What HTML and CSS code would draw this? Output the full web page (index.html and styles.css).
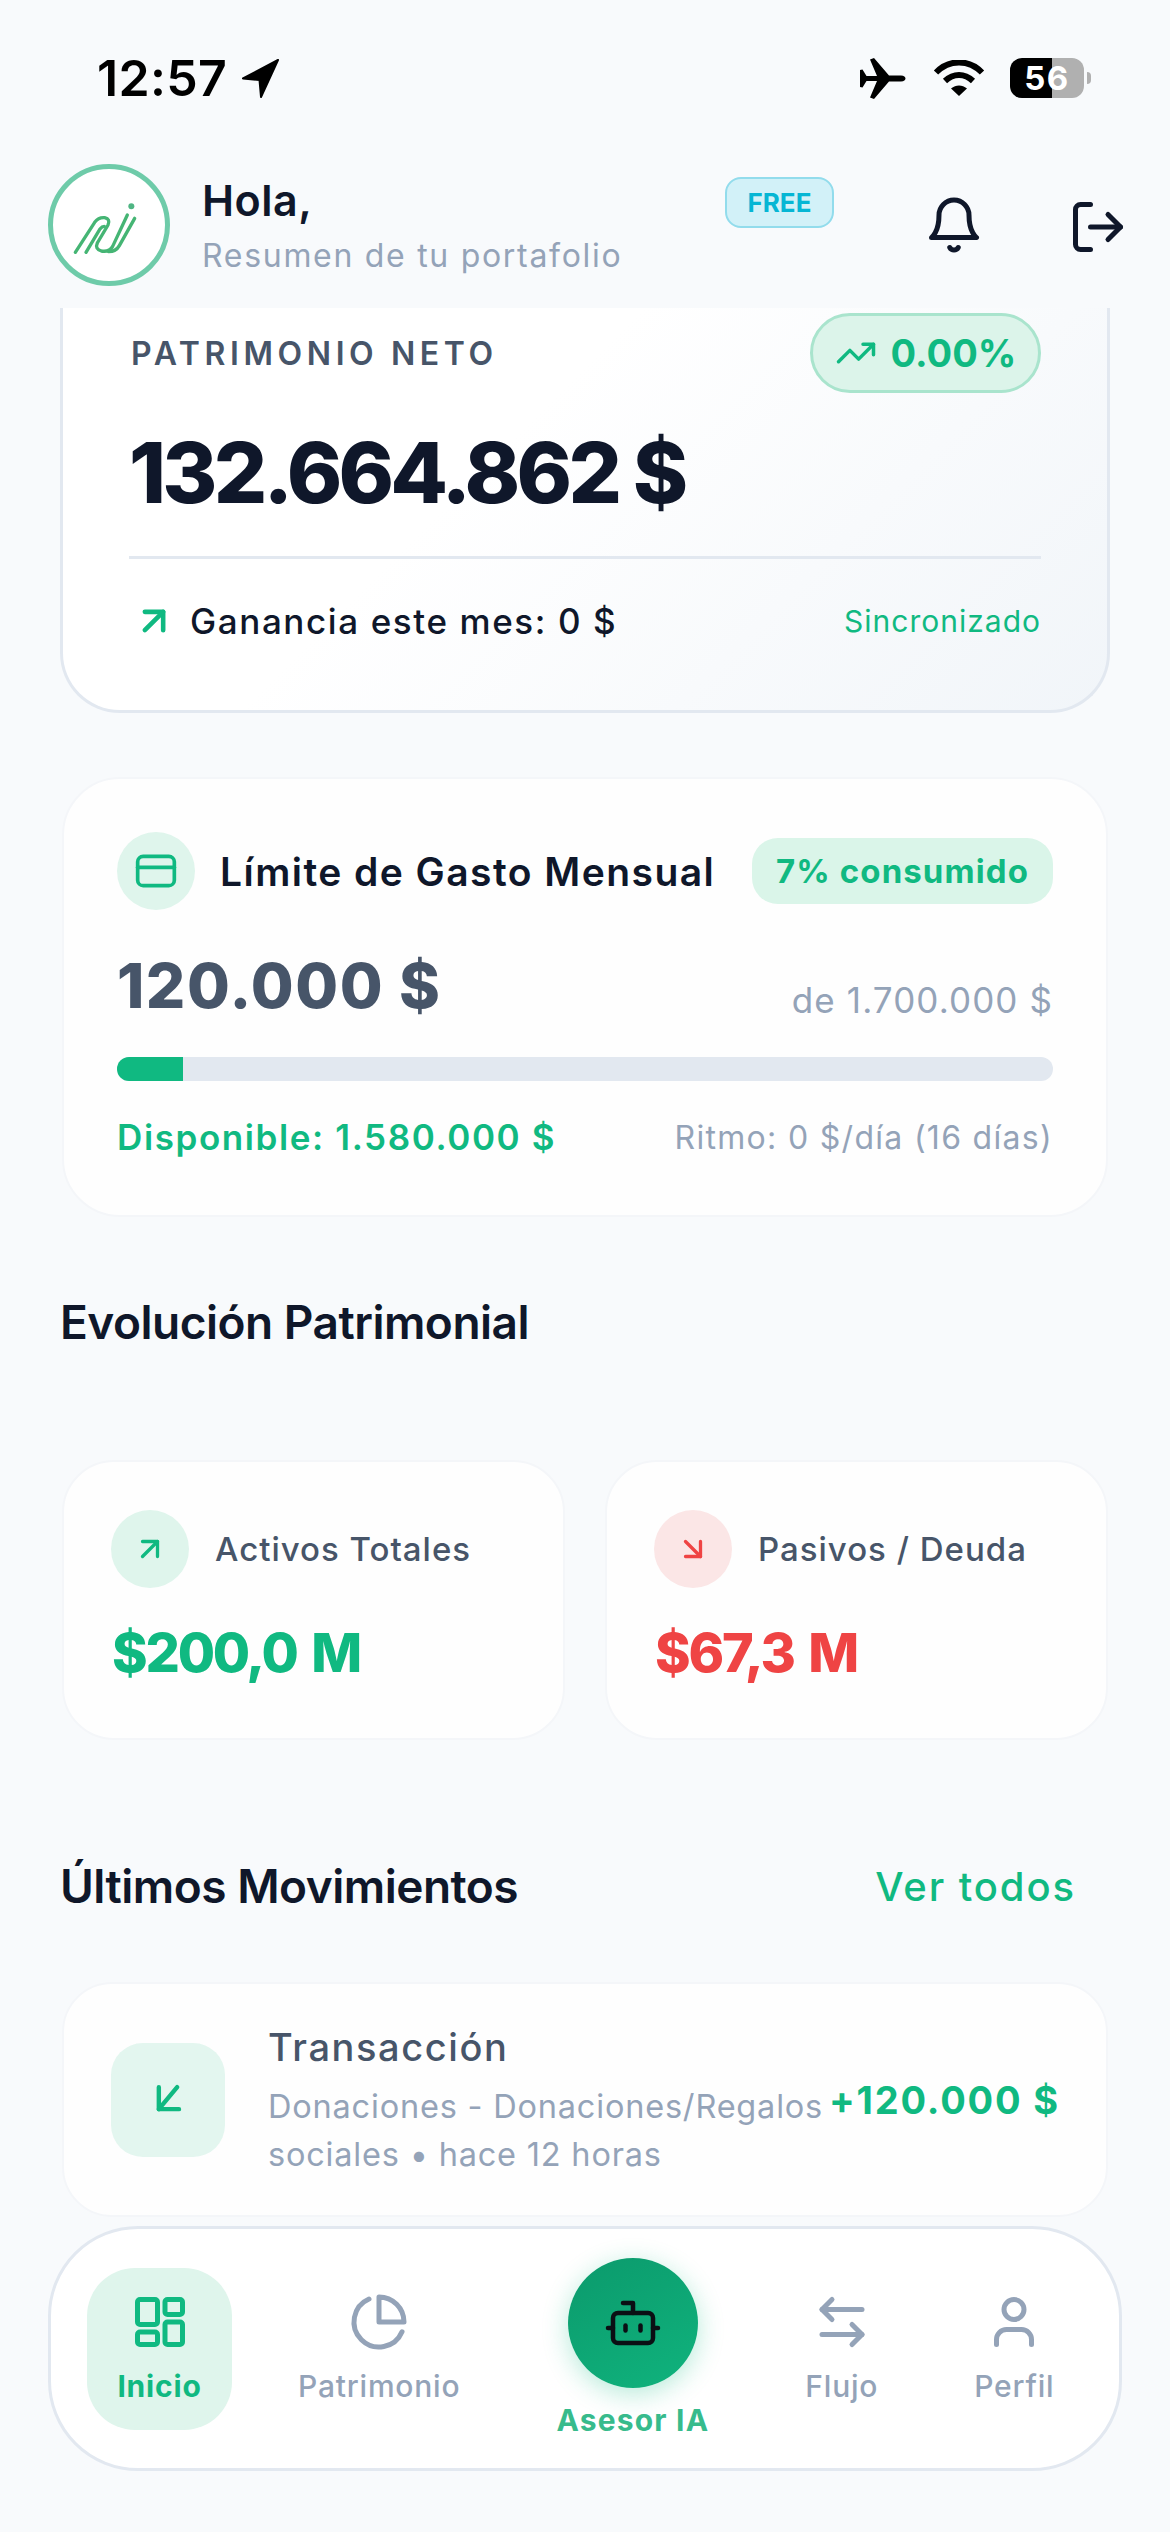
FILE: index.html
```html
<!DOCTYPE html>
<html lang="es">
<head>
    <meta charset="UTF-8">
    <meta name="viewport" content="width=device-width, initial-scale=1.0">
    <link rel="stylesheet" href="styles.css">
</head>
<body>
    <div class="status-bar">
        <div class="status-left">
            <span class="clock">12:57</span>
            <svg class="loc-icon" viewBox="0 0 40 40"><path d="M37 2 2 20.500l16.500 1.500L20 39z" fill="#000" stroke="#000" stroke-width="2" stroke-linejoin="round"/></svg>
        </div>
        <div class="status-right">
            <svg class="plane-icon" viewBox="0 0 47 41"><path d="M0 12l2.500-.5 4 6.500H17L10 1.500 14 0l15 17.500h12c6 0 6 6 0 6H29L14 41l-4-1.500L17 23H6.500l-4 6.500L0 29z" fill="#000"/></svg>
            <svg class="wifi-icon" viewBox="0 0 52 36"><path d="M3 12.500C16-1 36-1 49 12.500" fill="none" stroke="#000" stroke-width="6"/><path d="M12 21c8.500-8 19.500-8 28 0" fill="none" stroke="#000" stroke-width="6"/><path d="M18 28.500c5-4 11-4 16 0L26 36z" fill="#000"/></svg>
            <span class="battery">56</span>
            <span class="battery-nub"></span>
        </div>
    </div>

    <header class="top-header">
        <div class="avatar">
            <svg viewBox="0 0 225 195" class="logo" fill="none" stroke="#45b574" stroke-width="10" stroke-linecap="round">
                <path d="M10 178 68 88Q80 72 98 74Q116 78 108 96L76 150Q68 168 88 174Q112 178 122 160L166 66"/>
                <path d="M42 178 84 108Q90 100 97 100"/>
                <path d="M110 176Q132 176 142 158L188 76"/>
                <circle cx="178" cy="40" r="9" fill="#4fb583" stroke="none"/>
            </svg>
        </div>
        <div class="greeting">
            <div class="hello">Hola,</div>
            <div class="subtitle">Resumen de tu portafolio</div>
        </div>
        <span class="free-badge">FREE</span>
        <svg class="bell-icon" viewBox="0 0 24 24" fill="none" stroke="#0f172a" stroke-width="2" stroke-linecap="round" stroke-linejoin="round"><path d="M6 8a6 6 0 0 1 12 0c0 7 3 9 3 9H3s3-2 3-9"/><path d="M10.300 21a1.940 1.940 0 0 0 3.400 0"/></svg>
        <svg class="logout-icon" viewBox="0 0 24 24" fill="none" stroke="#0f172a" stroke-width="2" stroke-linecap="round" stroke-linejoin="round"><path d="M9 21H5a2 2 0 0 1-2-2V5a2 2 0 0 1 2-2h4"/><path d="m16 17 5-5-5-5"/><path d="M21 12H9"/></svg>
    </header>

    <section class="net-card">
        <div class="net-top">
            <span class="net-label">PATRIMONIO NETO</span>
            <span class="net-pill">
                <svg class="trend-icon" viewBox="0 0 24 24" fill="none" stroke="#10b981" stroke-width="2" stroke-linecap="round" stroke-linejoin="round"><path d="M22 7l-8.500 8.500-5-5L2 17"/><path d="M16 7h6v6"/></svg>
                0.00%
            </span>
        </div>
        <div class="net-value">132.664.862 $</div>
        <div class="net-bottom">
            <svg class="gain-icon" viewBox="0 0 24 24" fill="none" stroke="#10b981" stroke-width="2.500" stroke-linecap="round" stroke-linejoin="round"><path d="M7 7h10v10"/><path d="M7 17 17 7"/></svg>
            <span class="gain-text">Ganancia este mes: 0 $</span>
            <span class="sync-text">Sincronizado</span>
        </div>
    </section>

    <section class="card limit-card">
        <div class="limit-head">
            <span class="round-icon green-soft">
                <svg class="card-icon" viewBox="0 0 24 24" fill="none" stroke="#10b981" stroke-width="2" stroke-linecap="round" stroke-linejoin="round"><rect x="2" y="4" width="20" height="16" rx="3"/><path d="M2 10h20"/></svg>
            </span>
            <span class="limit-title">Límite de Gasto Mensual</span>
            <span class="limit-pill">7% consumido</span>
        </div>
        <div class="limit-amounts">
            <span class="limit-spent">120.000 $</span>
            <span class="limit-total">de 1.700.000 $</span>
        </div>
        <div class="bar"><div class="bar-fill" style="width: 7%"></div></div>
        <div class="limit-foot">
            <span class="limit-free">Disponible: 1.580.000 $</span>
            <span class="limit-pace">Ritmo: 0 $/día (16 días)</span>
        </div>
    </section>

    <h2 class="section-title evo-title">Evolución Patrimonial</h2>

    <div class="stat-row">
        <div class="card stat-card">
            <div class="stat-head">
                <span class="round-icon green-soft">
                    <svg class="stat-icon" viewBox="0 0 24 24" fill="none" stroke="#10b981" stroke-width="2.200" stroke-linecap="round" stroke-linejoin="round"><path d="M7 7h10v10"/><path d="M7 17 17 7"/></svg>
                </span>
                <span class="stat-label">Activos Totales</span>
            </div>
            <div class="stat-value green">$200,0 M</div>
        </div>
        <div class="card stat-card">
            <div class="stat-head">
                <span class="round-icon red-soft">
                    <svg class="stat-icon" viewBox="0 0 24 24" fill="none" stroke="#ef4444" stroke-width="2.200" stroke-linecap="round" stroke-linejoin="round"><path d="m7 7 10 10"/><path d="M17 7v10H7"/></svg>
                </span>
                <span class="stat-label">Pasivos / Deuda</span>
            </div>
            <div class="stat-value red">$67,3 M</div>
        </div>
    </div>

    <div class="moves-head">
        <h2 class="section-title">Últimos Movimientos</h2>
        <span class="see-all">Ver todos</span>
    </div>

    <div class="card move-card">
        <span class="move-icon">
            <svg class="move-arrow" viewBox="0 0 24 24" fill="none" stroke="#10b981" stroke-width="2.400" stroke-linecap="round" stroke-linejoin="round"><path d="M17 5 7 17"/><path d="M18 17H7V5"/></svg>
        </span>
        <div class="move-info">
            <div class="move-title">Transacción</div>
            <div class="move-sub">Donaciones - Donaciones/Regalos sociales • hace 12 horas</div>
        </div>
        <span class="move-amount">+120.000 $</span>
    </div>

    <nav class="bottom-nav">
        <div class="nav-item active">
            <svg class="nav-icon" viewBox="0 0 24 24" fill="none" stroke="#10b981" stroke-width="2" stroke-linecap="round" stroke-linejoin="round"><rect x="3" y="3" width="8" height="10" rx="1"/><rect x="14" y="3" width="7" height="6" rx="1"/><rect x="14" y="12" width="7" height="9" rx="1"/><rect x="3" y="16" width="8" height="5" rx="1"/></svg>
            <span>Inicio</span>
        </div>
        <div class="nav-item second">
            <svg class="nav-icon" viewBox="0 0 24 24" fill="none" stroke="#94a3b8" stroke-width="2" stroke-linecap="round" stroke-linejoin="round"><path d="M21.210 15.890A10 10 0 1 1 8 2.830"/><path d="M22 12A10 10 0 0 0 12 2v10z"/></svg>
            <span>Patrimonio</span>
        </div>
        <div class="nav-item advisor">
            <span class="advisor-btn">
                <svg class="bot-icon" viewBox="0 0 24 24" fill="none" stroke="#0b0f14" stroke-width="1.800" stroke-linecap="round" stroke-linejoin="round"><path d="M12 8V4H8"/><rect x="4" y="8" width="16" height="12" rx="2"/><path d="M2 14h2"/><path d="M20 14h2"/><path d="M15 13v2"/><path d="M9 13v2"/></svg>
            </span>
            <span>Asesor IA</span>
        </div>
        <div class="nav-item">
            <svg class="nav-icon" viewBox="0 0 24 24" fill="none" stroke="#94a3b8" stroke-width="2" stroke-linecap="round" stroke-linejoin="round"><path d="M8 3 4 7l4 4"/><path d="M4 7h16"/><path d="m16 21 4-4-4-4"/><path d="M20 17H4"/></svg>
            <span>Flujo</span>
        </div>
        <div class="nav-item">
            <svg class="nav-icon" viewBox="0 0 24 24" fill="none" stroke="#94a3b8" stroke-width="2" stroke-linecap="round" stroke-linejoin="round"><path d="M19 21v-2a4 4 0 0 0-4-4H9a4 4 0 0 0-4 4v2"/><circle cx="12" cy="7" r="4"/></svg>
            <span>Perfil</span>
        </div>
    </nav>
</body>
</html>
```

FILE: styles.css
```css
* {
    box-sizing: border-box;
}

body {
    margin: 0;
    height: 2532px;
    overflow: hidden;
    background-color: #f8fafc;
    color: #0f172a;
    font-family: Inter, "Noto Sans", sans-serif;
}

/* status bar */
.status-bar {
    height: 164px;
    padding: 56px 79px 0 97px;
    display: flex;
    justify-content: space-between;
    align-items: flex-start;
}

.status-left {
    display: flex;
    align-items: center;
    gap: 14px;
}

.clock {
    font-size: 50px;
    line-height: 44px;
    font-weight: 600;
    color: #000;
    letter-spacing: 0.3px;
}

.loc-icon {
    width: 40px;
    height: 40px;
}

.status-right {
    display: flex;
    align-items: center;
    height: 44px;
}

.plane-icon {
    width: 47px;
    height: 41px;
}

.wifi-icon {
    width: 52px;
    height: 36px;
    margin-left: 26px;
}

.battery {
    width: 74px;
    height: 40px;
    margin-left: 25px;
    border-radius: 12px;
    background: linear-gradient(90deg, #000 57%, #b0b0b0 57%);
    color: #fff;
    font-size: 33px;
    line-height: 40px;
    font-weight: 700;
    text-align: center;
    letter-spacing: 1.500px;
}

.battery-nub {
    width: 4px;
    height: 12px;
    margin-left: 3px;
    border-radius: 0 4px 4px 0;
    background-color: #b0b0b0;
}

/* header */
.top-header {
    height: 144px;
    padding-left: 48px;
    display: flex;
    align-items: flex-start;
}

.avatar {
    width: 122px;
    height: 122px;
    flex: none;
    border: 5px solid #6ecba9;
    border-radius: 50%;
    background-color: #fff;
    display: flex;
    align-items: center;
    justify-content: center;
}

.logo {
    width: 75px;
    height: 65px;
}

.greeting {
    width: 523px;
    flex: none;
    margin-left: 32px;
}

.hello {
    font-size: 43px;
    line-height: 50px;
    font-weight: 600;
    margin-top: 11px;
    letter-spacing: 0.5px;
}

.subtitle {
    font-size: 32px;
    line-height: 40px;
    margin-top: 11px;
    color: #94a3b8;
    letter-spacing: 1.7px;
}

.free-badge {
    width: 109px;
    height: 51px;
    flex: none;
    margin-top: 13px;
    border: 2px solid #92dcec;
    border-radius: 16px;
    background-color: #d2f1f8;
    color: #06b6d4;
    font-size: 26px;
    line-height: 47px;
    font-weight: 700;
    text-align: center;
}

.bell-icon {
    width: 60px;
    height: 60px;
    flex: none;
    margin: 31px 0 0 90px;
}

.logout-icon {
    width: 60px;
    height: 60px;
    flex: none;
    margin: 33px 0 0 84px;
}

/* net worth card */
.net-card {
    height: 405px;
    margin: 0 60px;
    padding: 5px 66px 0;
    border: 3px solid #e2e8f0;
    border-top: 0;
    border-radius: 0 0 60px 60px;
    background: linear-gradient(135deg, #ffffff 40%, #f1f5f9 100%);
}

.net-top {
    display: flex;
    justify-content: space-between;
    align-items: center;
}

.net-label {
    font-size: 32px;
    font-weight: 600;
    color: #475569;
    letter-spacing: 4.600px;
    margin-left: 2px;
}

.net-pill {
    width: 231px;
    height: 80px;
    border: 3px solid #a9e4cd;
    border-radius: 40px;
    background-color: #dcf4ea;
    color: #10b981;
    font-size: 38px;
    font-weight: 700;
    display: flex;
    align-items: center;
    justify-content: center;
    gap: 14px;
}

.trend-icon {
    width: 42px;
    height: 42px;
}

.net-value {
    font-size: 84px;
    line-height: 100px;
    font-weight: 800;
    letter-spacing: -3.800px;
    margin-top: 30px;
}

.net-bottom {
    margin-top: 33px;
    padding: 40px 0 0 3px;
    border-top: 3px solid #e2e8f0;
    display: flex;
    align-items: center;
}

.gain-icon {
    width: 44px;
    height: 44px;
}

.gain-text {
    flex: 1;
    margin-left: 14px;
    font-size: 35px;
    font-weight: 500;
    letter-spacing: 1.600px;
}

.sync-text {
    font-size: 30px;
    color: #10b981;
    letter-spacing: 1px;
}

/* plain cards */
.card {
    border: 2px solid #f4f6f9;
    background-color: #fefefe;
}

.limit-card {
    height: 440px;
    margin: 64px 62px 0;
    padding: 53px 53px 0;
    border-radius: 58px;
}

.limit-head {
    display: flex;
    align-items: center;
}

.round-icon {
    width: 78px;
    height: 78px;
    flex: none;
    border-radius: 50%;
    display: flex;
    align-items: center;
    justify-content: center;
}

.green-soft {
    background-color: #dff5ec;
}

.red-soft {
    background-color: #fbe6e6;
}

.card-icon {
    width: 44px;
    height: 44px;
}

.limit-title {
    flex: 1;
    margin-left: 25px;
    font-size: 39px;
    font-weight: 600;
    letter-spacing: 1.450px;
}

.limit-pill {
    width: 301px;
    height: 66px;
    border-radius: 26px;
    background-color: #daf5e9;
    color: #10b981;
    font-size: 33px;
    line-height: 66px;
    font-weight: 700;
    text-align: center;
    letter-spacing: 1.100px;
}

.limit-amounts {
    margin-top: 38px;
    display: flex;
    justify-content: space-between;
    align-items: flex-end;
}

.limit-spent {
    font-size: 62px;
    line-height: 76px;
    font-weight: 800;
    color: #475569;
    letter-spacing: 1.500px;
}

.limit-total {
    font-size: 35px;
    line-height: 44px;
    margin-bottom: 2px;
    color: #94a3b8;
    letter-spacing: 1.100px;
}

.bar {
    height: 24px;
    margin-top: 33px;
    border-radius: 12px;
    overflow: hidden;
    background-color: #e2e8f0;
}

.bar-fill {
    height: 100%;
    background-color: #10b981;
}

.limit-foot {
    margin-top: 35px;
    display: flex;
    justify-content: space-between;
    align-items: center;
}

.limit-free {
    font-size: 35px;
    font-weight: 600;
    color: #10b981;
    letter-spacing: 1.600px;
}

.limit-pace {
    font-size: 32px;
    color: #94a3b8;
    letter-spacing: 1.300px;
}

/* sections */
.section-title {
    margin: 0;
    font-size: 46px;
    line-height: 56px;
    font-weight: 600;
    letter-spacing: -0.500px;
}

.evo-title {
    margin: 77px 0 0 60px;
}

.stat-row {
    margin: 110px 62px 0;
    display: grid;
    grid-template-columns: 1fr 1fr;
    gap: 40px;
}

.stat-card {
    height: 280px;
    padding: 48px 0 0 47px;
    border-radius: 52px;
}

.stat-head {
    display: flex;
    align-items: center;
}

.stat-icon {
    width: 36px;
    height: 36px;
}

.stat-label {
    margin-left: 26px;
    font-size: 33px;
    font-weight: 500;
    color: #475569;
    letter-spacing: 1px;
}

.stat-value {
    margin-top: 30px;
    font-size: 54px;
    line-height: 70px;
    font-weight: 800;
    letter-spacing: -2.200px;
    word-spacing: 5px;
    padding-left: 1px;
}

.green {
    color: #10b981;
}

.red {
    color: #ef4444;
}

.moves-head {
    margin: 118px 94px 0 60px;
    display: flex;
    justify-content: space-between;
    align-items: center;
}

.see-all {
    font-size: 40px;
    font-weight: 500;
    color: #10b981;
    letter-spacing: 1.900px;
}

.move-card {
    height: 235px;
    margin: 68px 62px 0;
    padding: 0 47px 0 47px;
    border-radius: 50px;
    display: flex;
    align-items: center;
}

.move-icon {
    width: 114px;
    height: 114px;
    flex: none;
    border-radius: 32px;
    background-color: #e3f6ef;
    display: flex;
    align-items: center;
    justify-content: center;
}

.move-arrow {
    width: 44px;
    height: 44px;
}

.move-info {
    width: 561px;
    flex: none;
    margin-left: 43px;
    padding-top: 3px;
}

.move-title {
    font-size: 38px;
    line-height: 48px;
    font-weight: 500;
    color: #475569;
    letter-spacing: 1.600px;
}

.move-sub {
    margin-top: 12px;
    font-size: 32.500px;
    line-height: 48px;
    color: #94a3b8;
    letter-spacing: 0.8px;
}

.move-amount {
    margin-left: auto;
    font-size: 38px;
    font-weight: 700;
    color: #10b981;
    white-space: nowrap;
    letter-spacing: 1.800px;
}

/* bottom nav */
.bottom-nav {
    height: 245px;
    margin: 9px 48px 0;
    padding: 39px 0 0 36px;
    border: 3px solid #e2e8f0;
    border-radius: 90px;
    background-color: #fff;
    display: flex;
    align-items: flex-start;
}

.nav-item {
    margin-left: 96px;
    height: 162px;
    display: flex;
    flex-direction: column;
    align-items: center;
    font-size: 30px;
    line-height: 38px;
    font-weight: 500;
    color: #94a3b8;
    letter-spacing: 0.800px;
}

.nav-item:first-child {
    margin-left: 0;
}

.nav-item.second {
    margin-left: 66px;
}

.nav-item.active {
    width: 145px;
    border-radius: 48px;
    background-color: #dff5ec;
    color: #10b981;
    font-weight: 700;
}

.nav-icon {
    width: 60px;
    height: 60px;
    margin: 24px 0 15px;
}

.nav-item.advisor {
    margin-top: -10px;
    color: #37bb8c;
    font-weight: 700;
    letter-spacing: 1.200px;
}

.advisor-btn {
    width: 130px;
    height: 130px;
    flex: none;
    margin-bottom: 13px;
    border-radius: 50%;
    background: linear-gradient(150deg, #0b9a6c, #10b37d);
    box-shadow: 0 6px 26px rgba(16, 185, 129, 0.3);
    display: flex;
    align-items: center;
    justify-content: center;
}

.bot-icon {
    width: 60px;
    height: 60px;
}
```
